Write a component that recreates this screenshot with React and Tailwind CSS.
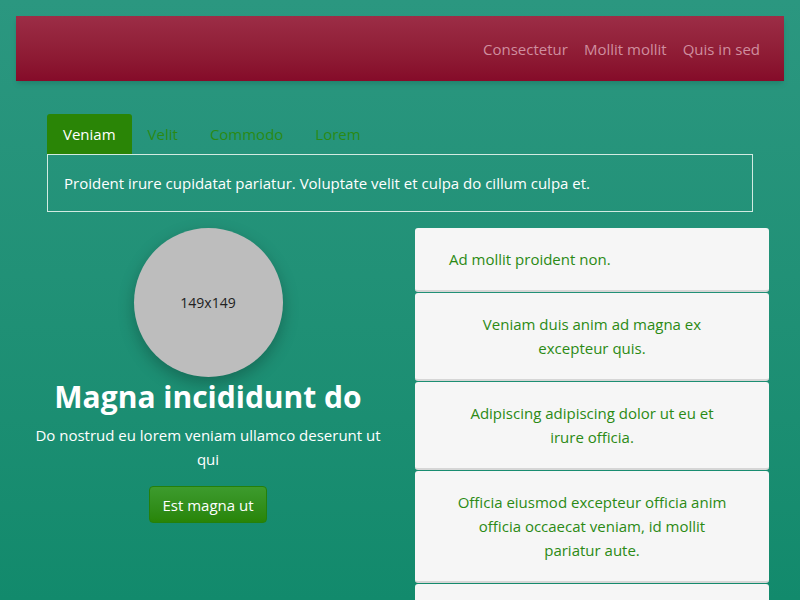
export default function App() {
  const cards = [
    { text: "Ad mollit proident non.", left: true },
    { text: "Veniam duis anim ad magna ex excepteur quis." },
    { text: "Adipiscing adipiscing dolor ut eu et irure officia." },
    { text: "Officia eiusmod excepteur officia anim officia occaecat veniam, id mollit pariatur aute." },
    { text: "Lorem ipsum dolor sit amet." },
  ];

  return (
    <div
      className="h-[600px] overflow-hidden bg-gradient-to-b from-[#2b9780] to-[#128a6c] p-4 text-[15px] leading-6"
      style={{ fontFamily: '"Segoe UI", "Open Sans", sans-serif' }}
    >
      {/* header */}
      <header className="flex h-[65px] items-center justify-end gap-4 bg-gradient-to-b from-[#9c2d46] to-[#850b29] pr-6 shadow-md">
        {["Consectetur", "Mollit mollit", "Quis in sed"].map((n) => (
          <a key={n} className="text-[#cf8e9f]">
            {n}
          </a>
        ))}
      </header>

      {/* tabs */}
      <div className="mx-[31px] mt-[33px]">
        <div className="flex">
          <div className="rounded-t-[3px] bg-[#2a8506] px-4 py-2 text-white">Veniam</div>
          {["Velit", "Commodo", "Lorem"].map((t) => (
            <div key={t} className="px-4 py-2 text-[#2a8a14]">
              {t}
            </div>
          ))}
        </div>
        <div className="border border-[#d2ebe2] px-4 py-4 text-white">
          Proident irure cupidatat pariatur. Voluptate velit et culpa do cillum culpa et.
        </div>
      </div>

      {/* columns */}
      <div className="mt-4 flex gap-[15px]">
        <div className="flex w-[384px] flex-col items-center px-4 text-center text-white">
          <div className="flex h-[149px] w-[149px] items-center justify-center rounded-full bg-[#bdbdbd] text-[14px] text-[#222] shadow-[0_6px_16px_rgba(0,0,0,0.25)]">
            149x149
          </div>
          <h1 className="text-[30px] font-bold leading-[40px]">Magna incididunt do</h1>
          <p className="mt-[6px]">Do nostrud eu lorem veniam ullamco deserunt ut qui</p>
          <button className="mt-[15px] h-[37px] rounded border border-[#25800a] bg-gradient-to-b from-[#3d9b2d] to-[#288506] px-3 text-white">
            Est magna ut
          </button>
        </div>
        <div className="flex w-[354px] flex-col gap-[1px]">
          {cards.map((c) => (
            <div
              key={c.text}
              className={`rounded-[3px] border-b-2 border-[#d6d6d6] bg-[#f6f6f6] py-[19px] text-[#2b8a14] ${
                c.left ? "px-[34px] text-left" : "px-[40px] text-center"
              }`}
            >
              {c.text}
            </div>
          ))}
        </div>
      </div>
    </div>
  );
}
